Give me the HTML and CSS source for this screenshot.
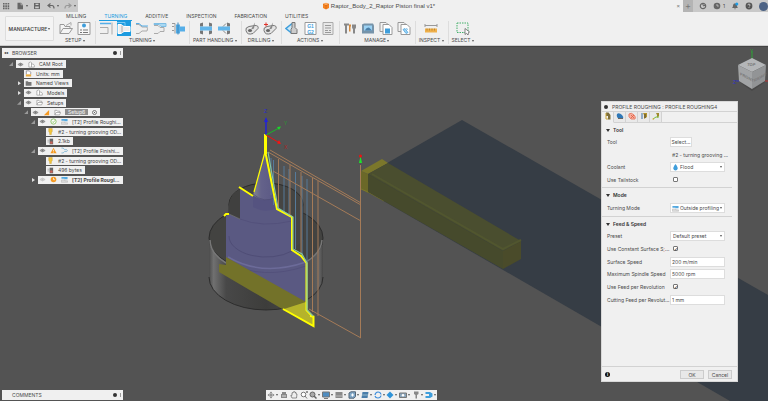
FILE: index.html
```html
<!DOCTYPE html>
<html lang="en">
<head>
    <meta charset="UTF-8">
    <meta name="viewport" content="width=device-width, initial-scale=1.0">
    <title>Raptor_Body_2_Raptor Piston final v1*</title>
    <link rel="stylesheet" href="styles.css">
</head>
<body>
    <!-- shared icons -->
    <svg class="defs" aria-hidden="true">
        <symbol id="eye" viewBox="0 0 8 8"><path d="M1 4Q4 .8 7 4Q4 7.2 1 4Z" fill="#ddd" stroke="#777" stroke-width=".8"/><circle cx="4" cy="4" r="1.3" fill="#777"/></symbol>
        <symbol id="box" viewBox="0 0 8 8"><path d="M1 7V2L3 1L4 2V7ZM4 3.5H6L7.2 5V7H4" fill="#fff" stroke="#888" stroke-width=".7"/></symbol>
        <symbol id="units" viewBox="0 0 8 8"><path d="M1.5 5V1H5L6.5 2.5V5" fill="#fff" stroke="#667" stroke-width=".7"/><path d="M1 5H7V7.4H1Z" fill="#e9a93a"/></symbol>
        <symbol id="folder" viewBox="0 0 8 8"><path d="M.8 1.5H3.3L4 2.3H7.4V6.7H.8Z" fill="#777"/></symbol>
        <symbol id="open" viewBox="0 0 8 8"><path d="M1 6.7V1.5H3.3L4 2.5H6.5V4M1 6.7L2.3 4H7.6L6.4 6.7Z" fill="#fff" stroke="#888" stroke-width=".7"/></symbol>
        <symbol id="wedge" viewBox="0 0 8 8"><path d="M7 1V7H1Z" fill="#f59a23"/></symbol>
        <symbol id="ok" viewBox="0 0 8 8"><circle cx="4" cy="4" r="3" fill="#fff" stroke="#6cb33f" stroke-width=".8"/><path d="M2.5 4L3.7 5.2L5.6 2.8" fill="none" stroke="#6cb33f" stroke-width=".8"/></symbol>
        <symbol id="warn" viewBox="0 0 8 8"><path d="M4 .8L7.5 7H.5Z" fill="#f59a23"/><path d="M4 3V5M4 5.6V6.3" stroke="#fff" stroke-width=".8"/></symbol>
        <symbol id="busy" viewBox="0 0 8 8"><circle cx="4" cy="4" r="3.2" fill="#f59a23"/><path d="M4 2V4.2H5.6" fill="none" stroke="#fff" stroke-width=".8"/></symbol>
        <symbol id="rough" viewBox="0 0 8 8"><path d="M.5 1H7.5V3.6H4V3H.5Z" fill="#54a9e0"/><path d="M.5 4.5H4.5V5.5H7.5V7.200H.5Z" fill="#ddd" stroke="#aaa" stroke-width=".5"/></symbol>
        <symbol id="finish" viewBox="0 0 8 8"><path d="M.5 1.2H2.5L4 3H6.5L7.3 4L6.5 5.2H4L2.5 6.8H.5" fill="#eee" stroke="#6aa9cf" stroke-width=".8"/></symbol>
        <symbol id="bulb" viewBox="0 0 8 8"><path d="M2 .5H6V4L5 5.5V7.5H3V5.5L2 4Z" fill="#f2c63c" stroke="#b98c1c" stroke-width=".4"/></symbol>
        <symbol id="size" viewBox="0 0 8 8"><path d="M3 .8H7V7.2H3Z" fill="#666"/><path d="M3.6 4H6.4V6.5H3.6Z" fill="#cf6256"/><path d="M.5 2.5H3M.5 4.5H3" stroke="#999" stroke-width=".8"/></symbol>
        <symbol id="drill" viewBox="0 0 14 14"><path d="M1 9Q0 6 4 5L10 4Q14 4 13 7L8 12Q2 14 1 9Z" fill="#e4e4e4" stroke="#777"/><ellipse cx="5" cy="9" rx="2" ry="1.5" fill="#666"/><path d="M10 1L6 8L9 7Z" fill="#888"/></symbol>
    </svg>

    <header class="titlebar">
        <div class="quick">
            <button aria-label="Data panel"><svg viewBox="0 0 8 8"><path d="M1 1h1.6v1.6H1zM3.3 1h1.6v1.6H3.3zM5.6 1h1.6v1.6H5.6zM1 3.3h1.6v1.6H1zM3.3 3.3h1.6v1.6H3.3zM5.6 3.3h1.6v1.6H5.6zM1 5.6h1.6v1.6H1zM3.3 5.6h1.6v1.6H3.3zM5.6 5.6h1.6v1.6H5.6z" fill="#666"/></svg></button>
            <button class="drop" aria-label="File"><svg viewBox="0 0 8 8"><path d="M1.5.8H5L7 2.8V7.2H1.5Z" fill="#666"/><path d="M5 .8V2.8H7" stroke="#ccc" fill="none" stroke-width=".6"/></svg></button>
            <button aria-label="Save"><svg viewBox="0 0 8 8"><path d="M1 1H7V7H1Z" fill="#666"/><path d="M2.5 1.8H5.5V3H2.5ZM2.2 4.6H5.8V6.2H2.2Z" fill="#ccc"/></svg></button>
            <button class="drop" aria-label="Undo"><svg viewBox="0 0 8 8"><path d="M3.5 1.5L1 3.5L3.5 5.5M1 3.5H5Q7 3.5 7 6.5" fill="none" stroke="#666" stroke-width="1.2"/></svg></button>
            <button class="drop" aria-label="Redo"><svg viewBox="0 0 8 8"><path d="M4.5 1.5L7 3.5L4.5 5.5M7 3.5H3Q1 3.5 1 6.5" fill="none" stroke="#999" stroke-width="1.2"/></svg></button>
        </div>
        <div class="doc-title">
            <svg viewBox="0 0 8 8"><path d="M1 2L4 .8L7 2V6L4 7.4L1 6Z" fill="#f58220"/><path d="M1 2L4 3.3L7 2M4 3.3V7" stroke="#c65a10" stroke-width=".5" fill="none"/><path d="M1.4 2L4 1L6.6 2L4 3Z" fill="#ffb067"/></svg>
            Raptor_Body_2_Raptor Piston final v1*
            <button class="close" aria-label="Close">×</button>
        </div>
        <div class="account">
            <button class="plus" aria-label="New tab">+</button>
            <button aria-label="Extensions"><svg viewBox="0 0 8 8"><circle cx="4" cy="4" r="2.7" fill="none" stroke="#666" stroke-width="1.2"/><path d="M3.5 1.2L4.5 4L6.5 3" stroke="#666" fill="none"/></svg></button>
            <button aria-label="Jobs"><svg viewBox="0 0 8 8"><circle cx="4" cy="4" r="3.3" fill="#666"/><path d="M4 2V4H5.8" stroke="#ccc" stroke-width=".8" fill="none"/></svg>1</button>
            <button aria-label="Notifications"><svg viewBox="0 0 8 8"><path d="M1 6Q2 5 2 3.5Q2 1.5 4 1.3Q6 1.5 6 3.5Q6 5 7 6ZM3 6.5H5L4 7.6Z" fill="#666"/><circle cx="5.8" cy="2" r="1.5" fill="#1d9ce5"/></svg></button>
            <button aria-label="Help"><svg viewBox="0 0 8 8"><circle cx="4" cy="4" r="3.4" fill="#555"/><path d="M2.9 3.2Q3 2 4 2T5 3.2Q5 3.8 4 4.4M4 5.2V6" stroke="#ddd" stroke-width=".8" fill="none"/></svg></button>
            <span class="avatar"></span>
        </div>
    </header>

    <div class="ribbon">
        <button class="workspace">MANUFACTURE <i class="caret"></i></button>
        <div class="ribbon-main">
            <nav class="tabs">
                <a href="#">MILLING</a>
                <a href="#" class="current">TURNING</a>
                <a href="#">ADDITIVE</a>
                <a href="#">INSPECTION</a>
                <a href="#">FABRICATION</a>
                <a href="#">UTILITIES</a>
            </nav>
            <div class="groups">
                <div class="group">
                    <div class="tools">
                        <svg viewBox="0 0 14 14"><path d="M1 12V3H5L6 5H11V7M1 12L4 7H13.500L10 12Z" fill="#f4f4f4" stroke="#999"/><path d="M7 4L12 1V4" fill="none" stroke="#aaa"/></svg>
                        <svg viewBox="0 0 14 14"><path d="M1 1H13V13H1Z" fill="#f8f8f8" stroke="#999"/><circle cx="7" cy="4" r="2" fill="#3f9edb"/><path d="M3 8.500H5M6 8.500H11M3 11H5M6 11H11" stroke="#777"/></svg>
                    </div>
                    <span class="name">SETUP <i class="caret"></i></span>
                </div>
                <div class="group">
                    <div class="tools">
                        <svg viewBox="0 0 14 14"><path d="M1 2H12" stroke="#55aee8" stroke-width="1.500"/><path d="M13 1V13M1 6H9V12H1" fill="none" stroke="#aaa"/></svg>
                        <svg class="active" viewBox="0 0 14 14"><path d="M0 1H8V5" fill="none" stroke="#7cc9f4"/><path d="M1 3H4L7 5H13V10H7L4 12H1Z" fill="#eee" stroke="#fff"/><path d="M5 4V11" stroke="#aaa"/></svg>
                        <svg viewBox="0 0 14 14"><path d="M1 3H4L7 5.500H12Q13 7 12 9.500H7L4 12H1" fill="#eee" stroke="#aaa"/><path d="M1 2H4L7 4.500H13" fill="none" stroke="#55aee8"/></svg>
                        <svg viewBox="0 0 14 14"><path d="M1 2H13V5H8L6 3H1Z" fill="#a9d8f2" stroke="#7dbde4"/><path d="M1 4H5L7 6H11V10H7L5 12H1" fill="#eee" stroke="#aaa"/></svg>
                        <svg viewBox="0 0 14 14"><path d="M1 2H4V12M1 5H3M1 9H3" fill="none" stroke="#999"/><path d="M5 3H9V5H14V10H9V12H5Z" fill="#55aee8"/><path d="M7 1V13" stroke="#3a84b8"/></svg>
                    </div>
                    <span class="name">TURNING <i class="caret"></i></span>
                </div>
                <div class="group">
                    <div class="tools">
                        <svg viewBox="0 0 14 14"><path d="M1 2L4 1V5H1ZM1 9H4V13L1 12ZM10 5V1L13 2V5ZM10 9H13V12L10 13Z" fill="#777"/><path d="M1 5H13V9H1Z" fill="#63b6ea"/></svg>
                        <svg viewBox="0 0 14 14"><path d="M10 5V1L13 2V5ZM10 9H13V12L10 13Z" fill="#777"/><path d="M1 5H13V9H1Z" fill="#63b6ea"/><path d="M9 2L6 5M9 12L6 9" stroke="#888"/></svg>
                    </div>
                    <span class="name">PART HANDLING <i class="caret"></i></span>
                </div>
                <div class="group">
                    <div class="tools">
                        <svg viewBox="0 0 14 14"><use href="#drill"/></svg>
                        <svg viewBox="0 0 14 14"><use href="#drill"/><path d="M1 3H5M3 1V5" stroke="#e0332b"/></svg>
                    </div>
                    <span class="name">DRILLING <i class="caret"></i></span>
                </div>
                <div class="group">
                    <div class="tools">
                        <svg viewBox="0 0 14 14"><path d="M7 2L1 7L7 12" fill="#cde8f7" stroke="#3f9edb" stroke-width="1.500"/><path d="M7 1H10V6L12 8V12H6V8L7 6Z" fill="#ccc" stroke="#777"/></svg>
                        <svg viewBox="0 0 14 14"><path d="M2 1H13V13H2Z" fill="#fff" stroke="#999"/><text x="7.500" y="6" class="code">G1</text><text x="7.500" y="12" class="code">G2</text></svg>
                        <svg viewBox="0 0 14 14"><path d="M2 1H12V13H2Z" fill="#e8e8e8" stroke="#aaa"/><path d="M4 4H10M4 6.500H10M4 9H7M8 9H10M4 11H10" stroke="#999"/></svg>
                    </div>
                    <span class="name">ACTIONS <i class="caret"></i></span>
                </div>
                <div class="group">
                    <div class="tools">
                        <svg viewBox="0 0 14 14"><path d="M1 2H6V4H1ZM2 4H4V12H2ZM9 3H13V6L12 8V12H10V8L9 6Z" fill="#888"/><path d="M6 3H8V5H7.500V10H6Z" fill="#d58a3d"/></svg>
                        <svg viewBox="0 0 14 14"><path d="M1 3L3 2H12L13 4V12H1Z" fill="#7794aa"/><path d="M3 4H11V9H3Z" fill="#9cd3f5"/><path d="M4 9Q5 6 8 6L11 9Z" fill="#4a7fa8"/></svg>
                        <svg viewBox="0 0 14 14"><path d="M1 1H7L9 3V10H1Z" fill="#f4f4f4" stroke="#999"/><path d="M4 3H10L13 6V13H4Z" fill="#fff" stroke="#999"/><path d="M6 7H11V12H6Z" fill="#3f9edb"/></svg>
                        <svg viewBox="0 0 14 14"><path d="M1 1H7L9 3V10H1Z" fill="#f4f4f4" stroke="#999"/><path d="M4 3H10L13 6V13H4Z" fill="#fff" stroke="#999"/><path d="M6 8L8 7L11 11L9 12ZM9 7L11 8" fill="#9cd3f5" stroke="#3f9edb" stroke-width=".7"/></svg>
                    </div>
                    <span class="name">MANAGE <i class="caret"></i></span>
                </div>
                <div class="group">
                    <div class="tools">
                        <svg viewBox="0 0 14 14"><path d="M1 4H13M1 2.500V5.500M13 2.500V5.500" stroke="#999"/><path d="M1 7H13V11H1Z" fill="#efb04b"/><path d="M3 7V9M5.500 7V9M8 7V9M10.500 7V9" stroke="#a56f18" stroke-width=".6"/></svg>
                    </div>
                    <span class="name">INSPECT <i class="caret"></i></span>
                </div>
                <div class="group">
                    <div class="tools">
                        <svg viewBox="0 0 14 14"><path d="M1 1.500H12V11H1Z" fill="none" stroke="#45b06b" stroke-dasharray="1.500 1"/><path d="M9 7V13L10.500 11.800L12 13.500L12.500 11L13.500 10.500Z" fill="#fff" stroke="#555" stroke-width=".7"/></svg>
                    </div>
                    <span class="name">SELECT <i class="caret"></i></span>
                </div>
            </div>
        </div>
    </div>

    <main class="viewport">
        <svg class="scene" viewBox="0 46 768 355" preserveAspectRatio="xMidYMid slice">
            <defs>
                <linearGradient id="steel"><stop offset="0" stop-color="#4c4c4c"/><stop offset=".04" stop-color="#707070"/><stop offset=".15" stop-color="#484848"/><stop offset=".5" stop-color="#3d3d3b"/><stop offset=".85" stop-color="#4a4a4a"/><stop offset=".97" stop-color="#626262"/><stop offset="1" stop-color="#484848"/></linearGradient>
                <linearGradient id="cone"><stop offset="0" stop-color="#85878c"/><stop offset=".35" stop-color="#64628a"/><stop offset="1" stop-color="#5a5884"/></linearGradient>
            </defs>
            <!-- chuck plane -->
            <path d="M462 120L768 295V401H730L368 192V174Z" fill="#363d45"/>
            <!-- tool holder -->
            <path d="M361 171L382 159L388 163L368 174Z" fill="#7b772b"/>
            <path d="M361 171L368 174V193L361 189Z" fill="#6b6828"/>
            <path d="M361 189L368 192L384 201" stroke="#7b772b" fill="none"/>
            <path d="M368 174L388 163L521 241L503 251Z" fill="#4a4e2f"/>
            <path d="M368 174L503 251V269L368 192Z" fill="#464a2c"/>
            <path d="M503 251L521 241V259L503 269Z" fill="#4a4b2a"/>
            <path d="M372 174L503 249L521 240" stroke="#51562f" stroke-width="2" fill="none"/>

            <!-- base -->
            <path d="M209 238V277A57 33 0 0 0 323 277V238Z" fill="url(#steel)"/>
            <ellipse cx="266" cy="238" rx="57" ry="33" fill="#434341" stroke="#2c2c2c"/>
            <path d="M210 240A56 33 0 0 0 226 263M306 262A56 33 0 0 0 322 240" fill="none" stroke="#777" stroke-width="1.500"/>
            <path d="M209 277A57 33 0 0 0 323 277" fill="none" stroke="#2c2c2c"/>
            <ellipse cx="266" cy="204" rx="37" ry="21" fill="#454543" stroke="#2c2c2c"/>
            <path d="M292 217L303 206V241L292 250Z" fill="#454545"/>
            <path d="M229 204V236M303 204V240" stroke="#383838"/>
            <!-- section -->
            <path d="M240 188L253 195H273L277 209L292 217V250L306 261V303L226 258V216L229 214L240 219Z" fill="#5a5982"/>
            <path d="M229 204V214L240 219V189Q230 194 229 204Z" fill="#40403f"/>
            <path d="M229 214L240 219" stroke="#777" stroke-width=".7"/>
            <path d="M229 236A37 21 0 0 0 292 251" fill="none" stroke="#4f4d76"/>
            <path d="M240 219Q262 228 292 221" fill="none" stroke="#504e78" stroke-width=".7"/>
            <path d="M228 257Q262 277 306 262" fill="none" stroke="#6c6b99" stroke-width="1.500"/>
            <path d="M228 262Q262 281 306 266" fill="none" stroke="#504e78" stroke-width=".7"/>
            <path d="M253 194V207Q265 214 277 208L275 194Z" fill="#555380"/>
            <path d="M265 152L253 195Q264 204 276 197Z" fill="url(#cone)"/>
            <path d="M253 194Q264 204 276 197" fill="none" stroke="#4f4d74" stroke-width=".7"/>
            <!-- lower section in stock -->
            <path d="M219 264L226 265V257L306 302V310L314 317V327L284 310L219 272Z" fill="#737229"/>
            <path d="M284 309L306 302V310L314 317V327Z" fill="#b5b32b"/>
            <path d="M283 309L313.500 326V316.500L310 316" fill="none" stroke="#ff0" stroke-width="2"/>

            <!-- toolpath -->
            <g fill="none" stroke="#567a9a">
                <path d="M271 158V195M273.500 160V205M284 166V213M289 169V216M295.500 172V249M302 176V257M307 179V308"/>
            </g>
            <g fill="none" stroke="#a57b58">
                <path d="M268 152L361 205M270 150L361 203M273 171L361 221M278.500 159V211M290 165V216M301 172V253M312.500 178V312M318 181V316M360.500 165V338M309 309L361 338"/>
            </g>
            <g fill="none" stroke="#ff0" stroke-width="2">
                <path d="M265.500 153L277 209L292 217V250L301 256L306.500 263V310L313 317"/>
                <path d="M265.500 134V154" stroke-width="3"/>
                <path d="M265 152L254 192" stroke-width="1.200"/>
                <path d="M239 187L253 196M224 216L226 214H229"/>
            </g>
            <path d="M268 152L278 208L293 217V249L302 254L307 263V310L313 316" fill="none" stroke="#86c4a2" stroke-width="1.200"/>

            <!-- axes -->
            <path d="M266 135V121" stroke="#2222d5" stroke-width="1.500"/>
            <path d="M264 122L266 117L268 122Z" fill="#22d"/>
            <path d="M266 135L278 128.500" stroke="#18b828"/>
            <path d="M281 126.500L277 127L279 130Z" fill="#1bd52b"/>
            <path d="M266 135L278 142" stroke="#e11"/>
            <path d="M281 144L277 143.500L279 140Z" fill="#f11"/>
            <text x="264" y="113" fill="#2929cc" class="axis">Z</text>
            <text x="284" y="125" fill="#219e30" class="axis">Y</text>
            <text x="284" y="149" fill="#b02222" class="axis">X</text>
            <path d="M359 163L360.500 156L362 163Z" fill="#1be52b"/>
            <circle cx="360.500" cy="156" r="1.500" fill="#e11"/>
        </svg>

        <svg class="cube" viewBox="0 0 36 44">
            <path d="M20 4V12" stroke="#2fa336"/><text x="18" y="6" fill="#2fa336" class="axis">Y</text>
            <path d="M20 42L8 35L10 37L20 44L32 36L34 33Z" fill="#494949"/>
            <path d="M20 11L34 18L20 25L6 18Z" fill="#b4b6b8"/>
            <path d="M6 18L20 25V42L7 34Z" fill="#a2a4a6"/>
            <path d="M34 18L20 25V42L33 34Z" fill="#929496"/>
            <text class="face" transform="translate(15 19) skewX(-10)">TOP</text>
            <text class="face" transform="translate(8 28) skewY(28)">FRONT</text>
            <text class="face" transform="translate(22 35) skewY(-28)">RIGHT</text>
            <text x="1" y="37" fill="#3434c4" class="axis">Z</text><path d="M4 34H7" stroke="#3434c4"/><path d="M33 34H36" stroke="#b33"/>
        </svg>

        <aside class="browser">
            <div class="bar"><span class="rewind">◂◂</span>BROWSER<span class="dot"></span><span class="grip"></span></div>
            <ul class="tree">
                <li class="d1"><i class="twist open"></i><span><svg><use href="#eye"/></svg><svg><use href="#box"/></svg>CAM Root</span></li>
                <li class="d2"><span><svg><use href="#units"/></svg>Units: mm</span></li>
                <li class="d2"><i class="twist"></i><span><svg><use href="#folder"/></svg>Named Views</span></li>
                <li class="d2"><i class="twist"></i><span><svg><use href="#eye"/></svg><svg><use href="#box"/></svg>Models</span></li>
                <li class="d2"><i class="twist open"></i><span><svg><use href="#eye"/></svg><svg><use href="#open"/></svg>Setups</span></li>
                <li class="d3"><i class="twist open"></i><span><svg><use href="#eye"/></svg><svg><use href="#wedge"/></svg><svg><use href="#open"/></svg><b class="selected">Setup6</b><i class="radio"></i></span></li>
                <li class="d4"><i class="twist open"></i><span class="wide"><svg><use href="#eye"/></svg><svg><use href="#ok"/></svg><svg><use href="#rough"/></svg>[T2] Profile Roughi...</span></li>
                <li class="d5"><span class="wide"><svg><use href="#bulb"/></svg>#2 - turning grooving OD...</span></li>
                <li class="d5"><span><svg><use href="#size"/></svg>2.1kb</span></li>
                <li class="d4"><i class="twist open"></i><span class="wide"><svg><use href="#eye"/></svg><svg><use href="#warn"/></svg><svg><use href="#finish"/></svg>[T2] Profile Finishi...</span></li>
                <li class="d5"><span class="wide"><svg><use href="#bulb"/></svg>#2 - turning grooving OD...</span></li>
                <li class="d5"><span><svg><use href="#size"/></svg>496 bytes</span></li>
                <li class="d4"><i class="twist"></i><span class="wide"><svg class="faded"><use href="#eye"/></svg><svg><use href="#busy"/></svg><svg><use href="#rough"/></svg><b>[T2] Profile Rougl...</b></span></li>
            </ul>
        </aside>

        <form class="dialog">
            <h1><span class="dot"></span>PROFILE ROUGHING : PROFILE ROUGHING4</h1>
            <div class="dialog-tabs">
                <button type="button" class="current" aria-label="Tool"><svg viewBox="0 0 8 8"><path d="M2 .5H4.500L6.500 3V7.500H4V4H2Z" fill="#7d6e3c"/><path d="M2 1V7H4" stroke="#c9a63a" fill="none"/></svg></button>
                <button type="button" aria-label="Geometry"><svg viewBox="0 0 8 8"><path d="M1 2Q3 0 6 3Q8 5 7 7H3Q0 5 1 2Z" fill="#2f78b7"/><path d="M2 6.500H7" stroke="#666"/></svg></button>
                <button type="button" aria-label="Radii"><svg viewBox="0 0 8 8"><path d="M1 2Q3 0 6 3Q8 5 7 7H3Q0 5 1 2Z" fill="#f5b19f" stroke="#e8806a"/><path d="M3 3L6 6M6 3L3 6" stroke="#e2593d" stroke-width=".8"/></svg></button>
                <button type="button" aria-label="Passes"><svg viewBox="0 0 8 8"><path d="M3 1H7V5L4 7V3Z" fill="#b49426"/><path d="M1 2H3M1 4H3M1 6H3" stroke="#3a6ea5"/><path d="M5 2V6" stroke="#444"/></svg></button>
                <button type="button" aria-label="Linking"><svg viewBox="0 0 8 8"><path d="M4 1H7V4L5 6V3Z" fill="#a08a2d"/><path d="M1 7L4 5H7" stroke="#7bbf3a" fill="none"/><path d="M.5 7H2" stroke="#e2a22d"/></svg></button>
            </div>
            <fieldset>
                <legend>Tool</legend>
                <div class="fields four">
                    <label for="tool">Tool</label><button type="button" id="tool" class="pick">Select...</button>
                    <span></span><span class="hint">#2 - turning grooving ...</span>
                    <label for="coolant">Coolant</label>
                    <div class="drop-box"><svg viewBox="0 0 8 8"><path d="M4 0Q7 4 6.500 5.500Q6 7.500 4 7.500T1.500 5.500Q1 4 4 0Z" fill="#3f9edb"/></svg><select id="coolant"><option>Flood</option></select></div>
                    <label for="tailstock">Use Tailstock</label><input type="checkbox" id="tailstock">
                </div>
            </fieldset>
            <fieldset>
                <legend>Mode</legend>
                <div class="fields one">
                    <label for="mode">Turning Mode</label>
                    <div class="drop-box"><svg><use href="#rough"/></svg><select id="mode"><option>Outside profiling</option></select></div>
                </div>
            </fieldset>
            <fieldset>
                <legend>Feed &amp; Speed</legend>
                <div class="fields six">
                    <label for="preset">Preset</label>
                    <div class="drop-box"><select id="preset"><option>Default preset</option></select></div>
                    <label for="constant">Use Constant Surface S<span class="red">;</span>...</label><input type="checkbox" id="constant" checked>
                    <label for="surface">Surface Speed</label><input type="text" id="surface" value="200 m/min">
                    <label for="spindle">Maximum Spindle Speed</label><input type="text" id="spindle" value="5000 rpm">
                    <label for="perrev">Use Feed per Revolution</label><input type="checkbox" id="perrev" checked>
                    <label for="feed">Cutting Feed per Revolut...</label><input type="text" id="feed" value="1 mm">
                </div>
            </fieldset>
            <footer>
                <span class="info">i</span>
                <button type="button">OK</button>
                <button type="button">Cancel</button>
            </footer>
        </form>

        <div class="bar comments">COMMENTS<span class="dot"></span><span class="grip"></span></div>

        <div class="navbar">
            <button class="drop" aria-label="Orbit"><svg viewBox="0 0 8 8"><path d="M4 .5L5.500 2.500H2.500ZM4 7.500L5.500 5.500H2.500ZM.5 4L2.500 2.500V5.500ZM7.500 4L5.500 2.500V5.500Z" fill="#777"/><circle cx="4" cy="4" r="1" fill="#777"/></svg></button>
            <button aria-label="Look at"><svg viewBox="0 0 8 8"><path d="M1 3H7V7H1ZM2 1H6V3H2Z" fill="#888"/><path d="M2 5H6" stroke="#ddd"/></svg></button>
            <button aria-label="Pan"><svg viewBox="0 0 8 8"><path d="M2 7L.8 4.500L2 4.300V1.800H3V1H4V.8H5V1.500H6V3H7L6.500 7Z" fill="#eee" stroke="#666" stroke-width=".7"/></svg></button>
            <button aria-label="Zoom"><svg viewBox="0 0 8 8"><circle cx="3.500" cy="3.500" r="2.300" fill="#fff" stroke="#777"/><path d="M5 5L7 7.500M6 1H8M7 0V2" stroke="#777"/></svg></button>
            <button class="drop" aria-label="Fit"><svg viewBox="0 0 8 8"><circle cx="3.500" cy="3.500" r="2.500" fill="#aaa" stroke="#666"/><path d="M5 5L7.500 7.500" stroke="#666" stroke-width="1.500"/></svg></button>
            <button class="drop" aria-label="Display"><svg viewBox="0 0 8 8"><path d="M.5 1H7.500V6H.5Z" fill="#4e8cc0" stroke="#777"/><path d="M2 7.500H6" stroke="#777"/></svg></button>
            <button class="drop" aria-label="Environment"><svg viewBox="0 0 8 8"><path d="M.5 1H7.500V7H.5Z" fill="#8a8a8a"/><path d="M.5 5H7.500" stroke="#bbb"/></svg></button>
            <button class="drop" aria-label="Grid"><svg viewBox="0 0 8 8"><path d="M1 2L3 .8H7.500V5.500L6 7.200H1Z" fill="#7fa6c6" stroke="#567"/><path d="M3 4H6M4.500 2.500V5.500" stroke="#fff"/></svg></button>
            <button class="drop" aria-label="Viewports"><svg viewBox="0 0 8 8"><path d="M1.500 1H7.500L6.500 7H.5Z" fill="#4a7eaa"/><path d="M1 4H7" stroke="#9bc"/></svg></button>
            <button class="drop" aria-label="Regenerate"><svg viewBox="0 0 8 8"><path d="M1 4Q1.500 1 4 1T7 3.500M7 4.500Q6.500 7 4 7T1 5" fill="none" stroke="#3f8edb" stroke-width="1.200"/></svg></button>
            <button class="drop" aria-label="Stock"><svg viewBox="0 0 8 8"><path d="M4 .5L7.500 4L4 7.500L.5 4Z" fill="#2f93d8"/></svg></button>
            <button class="drop" aria-label="Machine"><svg viewBox="0 0 8 8"><path d="M.5 2H7.500V6.500H.5Z" fill="#8ba5ba" stroke="#777"/><circle cx="4" cy="4.200" r="1.200" fill="#fff"/></svg></button>
            <button class="drop" aria-label="Tool view"><svg viewBox="0 0 8 8"><path d="M2 .5H6.500V3L5 4V7.500H3.500V4L2 3Z" fill="#888"/></svg></button>
            <button class="drop" aria-label="Toolpath"><svg viewBox="0 0 8 8"><path d="M.5 1H5L7.500 2.500V5.500L5 7H.5V5H4V3H.5Z" fill="#3f9edb"/></svg></button>
        </div>
    </main>
</body>
</html>
```

FILE: styles.css
```css
:root {
    --panel: #f0f0f0;
    --bar: #c9c9c9;
    --text: #4a4a4a;
    --line: #d2d2d2;
    --accent: #1d9ce0;
}

* {
    box-sizing: border-box;
}

body {
    margin: 0;
    min-height: 100vh;
    display: flex;
    flex-direction: column;
    font: 5px/8px Inter, "Open Sans", sans-serif;
    color: var(--text);
    background: #535353;
    overflow: hidden;
}

button, input, select {
    margin: 0;
    font: inherit;
    color: inherit;
}

button {
    padding: 0;
    border: 0;
    background: none;
}

svg {
    width: 8px;
    height: 8px;
    flex: none;
}

.defs {
    position: absolute;
    width: 0;
    height: 0;
}

.caret, .drop::after, .drop-box::after {
    content: "";
    display: inline-block;
    flex: none;
    border: 1px solid transparent;
    border-top: 2px solid #555;
    border-bottom: 0;
    vertical-align: middle;
}

.dot {
    width: 4px;
    height: 4px;
    border-radius: 50%;
    background: #333;
}

/* title bar */
.titlebar {
    display: flex;
    height: 12px;
    background: var(--panel);
}

.quick, .account {
    display: flex;
    align-items: center;
    background: var(--bar);
}

.quick {
    width: 78px;
    padding: 0 2px;
    justify-content: space-between;
}

.titlebar button {
    display: flex;
    align-items: center;
    gap: 2px;
}

.doc-title {
    flex: 1;
    display: flex;
    align-items: center;
    justify-content: center;
    gap: 1px;
    padding-right: 4px;
    position: relative;
    font: 6px/12px "Liberation Sans", Arial, sans-serif;
}

.doc-title .close {
    position: absolute;
    right: 3px;
    color: #777;
}

.account {
    width: 85px;
    gap: 6px;
    overflow: hidden;
}

.account .plus {
    width: 13px;
    height: 12px;
    justify-content: center;
    background: #b4b4b4;
    color: #777;
    font-size: 9px;
}

.avatar {
    flex: none;
    width: 9px;
    height: 9px;
    border-radius: 50%;
    background: #4d6385;
}

/* ribbon */
.ribbon {
    display: flex;
    height: 34px;
    background: var(--panel);
    border-bottom: 1px solid #ccc;
}

.workspace {
    width: 49px;
    height: 25px;
    margin: 4px 2px 0 5px;
    border: 1px solid #ddd;
    border-radius: 1px;
    background: #f4f4f4;
    font-weight: 600;
    white-space: nowrap;
}

.tabs {
    display: flex;
    gap: 18px;
    padding-left: 10px;
    height: 9px;
}

.tabs a {
    color: inherit;
    text-decoration: none;
    position: relative;
}

.tabs .current {
    color: var(--accent);
}

.tabs .current::after {
    content: "";
    position: absolute;
    left: -5px;
    right: -5px;
    bottom: 0;
    height: 1px;
    background: var(--accent);
}

.groups {
    display: flex;
    height: 23px;
}

.group {
    display: flex;
    flex-direction: column;
    align-items: center;
    padding: 0 4px 0 3px;
    border-right: 1px solid #ddd;
    white-space: nowrap;
}

.group:last-child {
    border: 0;
}

.tools {
    display: flex;
    gap: 4px;
}

.tools svg {
    width: 14px;
    height: 15px;
}

.tools .active {
    background: var(--accent);
}

.code {
    font: bold 5px "Liberation Sans", sans-serif;
    fill: #3f9edb;
    text-anchor: middle;
}

/* viewport */
.viewport {
    flex: 1;
    position: relative;
    border-top: 1px solid #444;
}

.scene {
    position: absolute;
    top: -1px;
    width: 100%;
    height: calc(100% + 1px);
}

.axis {
    font: 5px "Liberation Sans", sans-serif;
}

.cube {
    position: absolute;
    top: 0;
    right: 0;
    width: 36px;
    height: 44px;
}

.face {
    font: bold 4px "Liberation Sans", sans-serif;
    fill: #777;
}

.bar {
    display: flex;
    align-items: center;
    gap: 3px;
    height: 10px;
    padding: 0 2px;
    background: var(--panel);
}

.bar .dot {
    margin-left: auto;
}

.grip {
    width: 1px;
    height: 4px;
    background: #999;
}

.rewind {
    width: 5px;
    font-size: 4px;
    color: #222;
}

.browser {
    position: absolute;
    top: 1px;
    left: 2px;
    width: 121px;
}

.tree {
    display: flex;
    flex-direction: column;
    justify-content: space-between;
    height: 124px;
    margin: 2px 0 0;
    padding: 0;
    list-style: none;
}

.tree li {
    display: flex;
    position: relative;
    height: 8px;
    color: #444;
}

.tree span {
    display: flex;
    align-items: center;
    gap: 4px;
    padding: 0 3px 0 1px;
    background: var(--panel);
    white-space: nowrap;
}

.tree svg {
    width: 7px;
    height: 7px;
}

.tree .wide {
    flex: 1;
    min-width: 0;
}

.d1 { padding-left: 14px; }
.d2 { padding-left: 22px; }
.d3 { padding-left: 29px; }
.d4 { padding-left: 36px; }
.d5 { padding-left: 44px; }

.twist {
    width: 5px;
    margin: 2px 2px 2px -7px;
    background: #ddd;
    clip-path: polygon(20% 0, 80% 50%, 20% 100%);
}

.twist.open {
    background: #999;
    clip-path: polygon(80% 0, 80% 100%, 0 100%);
}

.tree .selected {
    padding: 0 3px;
    line-height: 6px;
    color: #eee;
    background: #8d8d8d;
    font-weight: 500;
}

.radio {
    width: 5px;
    height: 5px;
    border: 1px solid #777;
    border-radius: 50%;
    background: #333;
    background-clip: content-box;
    padding: 1px;
}

.faded {
    opacity: .4;
}

.comments {
    position: absolute;
    left: 2px;
    bottom: 1px;
    width: 121px;
    padding-left: 10px;
}

.navbar {
    position: absolute;
    left: 266px;
    bottom: 1px;
    width: 171px;
    height: 10px;
    padding: 0 1px;
    display: flex;
    align-items: center;
    justify-content: space-between;
    background: var(--panel);
}

.navbar button {
    display: flex;
    align-items: center;
    gap: 1px;
}

/* operation dialog */
.dialog {
    position: absolute;
    top: 54px;
    right: 30px;
    bottom: 19px;
    width: 137px;
    display: flex;
    flex-direction: column;
    background: var(--panel);
    border: 1px solid #d8d8d8;
}

.dialog h1 {
    display: flex;
    align-items: center;
    gap: 4px;
    height: 9px;
    margin: 0;
    padding-left: 2px;
    font: inherit;
    white-space: nowrap;
}

.dialog-tabs {
    display: flex;
    height: 12px;
    border-top: 1px solid var(--line);
}

.dialog-tabs button {
    width: 12px;
    border-right: 1px solid var(--line);
    border-bottom: 1px solid var(--line);
    background: #e9e9e9;
}

.dialog-tabs::after {
    content: "";
    flex: 1;
    border-bottom: 1px solid var(--line);
}

.dialog-tabs .current {
    border-bottom-color: var(--panel);
    background: var(--panel);
}

fieldset {
    min-width: 0;
    margin: 0 5px 0 0;
    padding: 0 0 1px 5px;
    border: 0;
    border-bottom: 1px solid var(--line);
}

fieldset:last-of-type {
    border: 0;
}

legend {
    height: 13px;
    padding: 0;
    margin-left: -1px;
    line-height: 14px;
    font-weight: 600;
    color: #333;
}

legend::before {
    content: "";
    display: inline-block;
    margin-right: 3px;
    border: 2px solid transparent;
    border-top: 3px solid #333;
    border-bottom: 0;
    vertical-align: middle;
}

.fields {
    display: grid;
    grid-template-columns: 63px 55px;
    grid-auto-rows: 1fr;
    align-items: center;
    white-space: nowrap;
}

.fields.one { height: 14px; }
.fields.four { height: 50px; }
.fields.six { height: 76px; }

.pick {
    width: 22px;
    height: 10px;
    border: 1px solid #ddd;
    background: #fff;
}

.hint {
    padding-left: 2px;
}

.red {
    color: #d96b4a;
}

.drop-box, .fields input[type="text"] {
    width: 55px;
    height: 10px;
    border: 1px solid #ddd;
    background: #fff;
}

.fields input[type="text"] {
    padding: 0 1px;
}

.drop-box {
    display: flex;
    align-items: center;
    padding: 0 2px 0 1px;
}

.drop-box select {
    flex: 1;
    min-width: 0;
    height: 8px;
    padding: 0 0 0 1px;
    border: 0;
    background: none;
    appearance: none;
}

.drop-box svg {
    width: 7px;
    height: 7px;
}

.fields input[type="checkbox"] {
    appearance: none;
    display: grid;
    place-items: center;
    width: 5px;
    height: 5px;
    margin-left: 3px;
    border: 1px solid #777;
    border-radius: 1px;
    background: #fff;
}

.fields input:checked::after {
    content: "✓";
    font: bold 5px/5px "DejaVu Sans", sans-serif;
    color: #222;
}

.dialog footer {
    display: flex;
    align-items: center;
    gap: 4px;
    height: 15px;
    margin-top: auto;
    padding: 0 5px 0 3px;
    border-top: 1px solid var(--line);
}

.dialog footer button {
    width: 24px;
    height: 9px;
    border: 1px solid #ccc;
    background: #e8e8e8;
}

.info {
    width: 5px;
    height: 5px;
    margin-right: auto;
    border-radius: 50%;
    background: #111;
    color: #fff;
    font-weight: 700;
    font-size: 4px;
    line-height: 5px;
    text-align: center;
}
```
